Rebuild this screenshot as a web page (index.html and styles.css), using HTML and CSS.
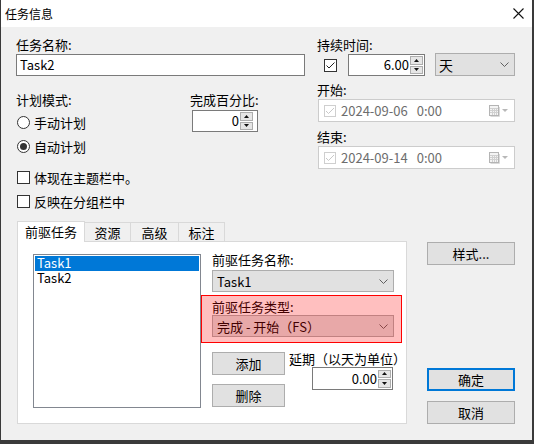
FILE: index.html
```html
<!DOCTYPE html>
<html lang="zh-CN">
<head>
<meta charset="utf-8">
<title>任务信息</title>
<link rel="stylesheet" href="styles.css">
</head>
<body>
<div class="window">
  <div class="titlebar">
    <span class="title">任务信息</span>
    <span class="close"><svg width="11" height="11" viewBox="0 0 11 11"><path d="M0.5 0.5L10.5 10.5M10.5 0.5L0.5 10.5" stroke="#111" stroke-width="1.1" fill="none"/></svg></span>
  </div>
  <div class="client">
    <div class="top">
      <div class="col-left">
        <div class="lbl">任务名称:</div>
        <div class="textbox name-box">Task2</div>
        <div class="mode-row">
          <div class="mode-group">
            <div class="lbl">计划模式:</div>
            <div class="opt r1"><span class="radio"></span>手动计划</div>
            <div class="opt r2"><span class="radio on"></span>自动计划</div>
            <div class="opt c1"><span class="check"></span>体现在主题栏中。</div>
            <div class="opt c2"><span class="check"></span>反映在分组栏中</div>
          </div>
          <div class="pct-group">
            <div class="lbl">完成百分比:</div>
            <div class="spin pct-spin">
              <span class="val">0</span>
              <span class="spinbtns">
                <span class="sb"><svg width="5" height="3" viewBox="0 0 5 3"><path d="M2.5 0L5 3H0Z" fill="#111"/></svg></span>
                <span class="sb"><svg width="5" height="3" viewBox="0 0 5 3"><path d="M0 0H5L2.5 3Z" fill="#111"/></svg></span>
              </span>
            </div>
          </div>
        </div>
      </div>
      <div class="col-right">
        <div class="lbl">持续时间:</div>
        <div class="dur-row">
          <span class="check checked dur-check"><svg width="11" height="11" viewBox="0 0 11 11"><path d="M1.5 5.5L4 8L9.5 2.5" stroke="#222" stroke-width="1" fill="none"/></svg></span>
          <div class="spin dur-spin">
            <span class="val">6.00</span>
            <span class="spinbtns">
              <span class="sb"><svg width="5" height="3" viewBox="0 0 5 3"><path d="M2.5 0L5 3H0Z" fill="#111"/></svg></span>
              <span class="sb"><svg width="5" height="3" viewBox="0 0 5 3"><path d="M0 0H5L2.5 3Z" fill="#111"/></svg></span>
            </span>
          </div>
          <div class="combo unit-combo"><span>天</span><svg width="9" height="5" viewBox="0 0 9 5"><path d="M0.5 0.5L4.5 4.5L8.5 0.5" fill="none" stroke="#606060"/></svg></div>
        </div>
        <div class="lbl start-lbl">开始:</div>
        <div class="datepick">
          <span class="dcheck"><svg width="10" height="10" viewBox="0 0 10 10"><path d="M1 5L3.5 7.5L9 2" stroke="#c8c8c8" fill="none"/></svg></span>
          <span class="dtext">2024-09-06</span><span class="dtime">0:00</span>
          <span class="dicon"><svg width="20" height="12" viewBox="0 0 20 12"><rect x="0.5" y="0.5" width="9" height="10" fill="#f4f4f4" stroke="#b4b4b4"/><path d="M1 3.5H9M1 5.5H9M1 7.5H9M3.5 3V10M5.5 3V10M7.5 3V10" stroke="#d0d0d0"/><path d="M10.5 2V11.5H1.5" stroke="#dadada" fill="none"/><path d="M13 4H19L16 7Z" fill="#b8b8b8"/></svg></span>
        </div>
        <div class="lbl end-lbl">结束:</div>
        <div class="datepick">
          <span class="dcheck"><svg width="10" height="10" viewBox="0 0 10 10"><path d="M1 5L3.5 7.5L9 2" stroke="#c8c8c8" fill="none"/></svg></span>
          <span class="dtext">2024-09-14</span><span class="dtime">0:00</span>
          <span class="dicon"><svg width="20" height="12" viewBox="0 0 20 12"><rect x="0.5" y="0.5" width="9" height="10" fill="#f4f4f4" stroke="#b4b4b4"/><path d="M1 3.5H9M1 5.5H9M1 7.5H9M3.5 3V10M5.5 3V10M7.5 3V10" stroke="#d0d0d0"/><path d="M10.5 2V11.5H1.5" stroke="#dadada" fill="none"/><path d="M13 4H19L16 7Z" fill="#b8b8b8"/></svg></span>
        </div>
      </div>
    </div>

    <div class="bottom">
      <div class="tabarea">
        <div class="tabs">
          <span class="tab sel">前驱任务</span>
          <span class="tab t2">资源</span>
          <span class="tab t3">高级</span>
          <span class="tab t4">标注</span>
        </div>
        <div class="panel">
          <div class="listbox">
            <div class="item selected">Task1</div>
            <div class="item">Task2</div>
          </div>
          <div class="pred">
            <div class="lbl">前驱任务名称:</div>
            <div class="combo pred-combo"><span>Task1</span><svg width="9" height="5" viewBox="0 0 9 5"><path d="M0.5 0.5L4.5 4.5L8.5 0.5" fill="none" stroke="#606060"/></svg></div>
            <div class="redbox">
              <div class="lbl">前驱任务类型:</div>
              <div class="combo type-combo"><span>完成 - 开始（FS）</span><svg width="9" height="5" viewBox="0 0 9 5"><path d="M0.5 0.5L4.5 4.5L8.5 0.5" fill="none" stroke="#606060"/></svg></div>
            </div>
            <div class="act-row">
              <div class="act-btns">
                <div class="btn">添加</div>
                <div class="btn del">删除</div>
              </div>
              <div class="delay">
                <div class="lbl">延期（以天为单位）</div>
                <div class="spin delay-spin">
                  <span class="val">0.00</span>
                  <span class="spinbtns">
                    <span class="sb"><svg width="5" height="3" viewBox="0 0 5 3"><path d="M2.5 0L5 3H0Z" fill="#111"/></svg></span>
                    <span class="sb"><svg width="5" height="3" viewBox="0 0 5 3"><path d="M0 0H5L2.5 3Z" fill="#111"/></svg></span>
                  </span>
                </div>
              </div>
            </div>
          </div>
        </div>
      </div>
      <div class="side">
        <div class="btn style-btn">样式...</div>
        <div class="btn ok-btn">确定</div>
        <div class="btn cancel-btn">取消</div>
      </div>
    </div>
  </div>
</div>
</body>
</html>
```
FILE: styles.css
```css
* { box-sizing: border-box; }
html, body { margin: 0; padding: 0; }
body {
  width: 534px;
  height: 444px;
  overflow: hidden;
  background: #3a3a3a;
  font-family: "Noto Sans CJK SC", "Noto Sans", sans-serif;
  font-size: 13px;
  color: #000;
}
.window {
  width: 534px;
  height: 444px;
  background: #f0f0f0;
  border-left: 1px solid #3a3a3a;
  border-right: 2px solid #3a3a3a;
  border-bottom: 4px solid #3a3a3a;
  display: flex;
  flex-direction: column;
}
.titlebar {
  flex: none;
  height: 27px;
  background: #fff;
  display: flex;
  align-items: center;
  justify-content: space-between;
  padding: 0 8px 0 4px;
  font-size: 12px;
}
.close { display: flex; }
.client {
  padding: 10px 0 0 15px;
}
.lbl {
  height: 16px;
  line-height: 15px;
  white-space: nowrap;
}

/* top section */
.top { display: flex; }
.col-left { width: 289px; }
.col-right { width: 198px; margin-left: 12px; }
.textbox {
  background: #fff;
  border: 1px solid #7a7a7a;
  height: 22px;
  line-height: 20px;
  padding-left: 3px;
}
.name-box { margin-top: 1px; }
.mode-row { display: flex; margin-top: 16px; }
.mode-group { width: 174px; }
.opt {
  display: flex;
  align-items: center;
  height: 16px;
  line-height: 15px;
  white-space: nowrap;
}
.r1 { margin-top: 6px; }
.r2 { margin-top: 8px; }
.c1 { margin-top: 15px; }
.c2 { margin-top: 8px; }
.radio {
  flex: none;
  width: 13px;
  height: 13px;
  border: 1px solid #333;
  border-radius: 50%;
  background: #fff;
  margin: 0 4px 0 1px;
  display: flex;
  align-items: center;
  justify-content: center;
}
.radio.on::after {
  content: "";
  width: 7px;
  height: 7px;
  border-radius: 50%;
  background: #333;
}
.check {
  flex: none;
  width: 13px;
  height: 13px;
  border: 1px solid #333;
  background: #fff;
  margin: 0 4px 0 1px;
  display: flex;
  align-items: center;
  justify-content: center;
}

.spin {
  display: flex;
  align-items: center;
  background: #fff;
  border: 1px solid #7a7a7a;
  height: 22px;
}
.spin .val {
  flex: 1;
  text-align: right;
  line-height: 20px;
  padding-right: 1px;
}
.spinbtns {
  flex: none;
  display: flex;
  flex-direction: column;
  gap: 1px;
  width: 13px;
  height: 18px;
}
.sb {
  flex: 1;
  background: #e6e6e6;
  border: 1px solid #adadad;
  display: flex;
  align-items: center;
  justify-content: center;
}
.pct-spin { width: 66px; margin: 2px 0 0 2px; padding-right: 4px; }
.dur-row { display: flex; align-items: flex-start; height: 23px; }
.dur-check { margin: 6px 0 0 7px; }
.dur-spin { flex: none; width: 77px; margin: 1px 0 0 11px; padding-right: 1px; }
.combo {
  display: flex;
  align-items: center;
  justify-content: space-between;
  background: #e1e1e1;
  border: 1px solid #adadad;
  padding: 0 5px 0 4px;
  white-space: nowrap;
}
.unit-combo { flex: none; width: 80px; height: 23px; margin-left: 10px; font-size: 14px; padding-left: 3px; }
.start-lbl { margin-top: 6px; }
.end-lbl { margin-top: 7px; }
.datepick {
  width: 197px;
  height: 23px;
  margin: 1px 0 0 1px;
  background: #fff;
  border: 1px solid #cccccc;
  display: flex;
  align-items: center;
  color: #6d6d6d;
  padding-left: 5px;
}
.dcheck {
  width: 12px;
  height: 12px;
  border: 1px solid #cfcfcf;
  display: flex;
  align-items: center;
  justify-content: center;
  margin-right: 5px;
}
.dtime { margin-left: 9px; }
.dicon { margin-left: auto; margin-right: 5px; display: flex; }

/* bottom section */
.bottom { display: flex; margin-top: 12px; }
.tabarea { flex: none; width: 390px; margin-left: 1px; }
.tabs { display: flex; height: 21px; align-items: flex-start; position: relative; z-index: 1; }
.tab {
  display: flex;
  align-items: center;
  justify-content: center;
  height: 19px;
  margin-top: 1px;
  border: 1px solid #d9d9d9;
  border-bottom: none;
  border-left: none;
  background: #f0f0f0;
  white-space: nowrap;
}
.tab.sel {
  height: 21px;
  margin-top: 0;
  width: 68px;
  background: #fff;
  border-left: 1px solid #d9d9d9;
  padding-bottom: 2px;
}
.t2 { width: 46px; }
.t3 { width: 48px; }
.t4 { width: 46px; }
.panel {
  height: 183px;
  margin-top: -1px;
  background: #fff;
  border: 1px solid #d9d9d9;
  display: flex;
  align-items: flex-start;
}
.listbox {
  flex: none;
  width: 168px;
  height: 154px;
  margin: 12px 0 0 15px;
  border: 1px solid #828790;
  padding: 1px;
}
.item {
  height: 15px;
  line-height: 14px;
  padding-left: 2px;
}
.item.selected { background: #0078d7; color: #fff; }
.pred { flex: none; width: 182px; margin: 10px 0 0 11px; }
.pred-combo { height: 22px; margin-top: 2px; }
.redbox {
  position: relative;
  margin: 3px -8px 0 -11px;
  padding: 4px 8px 6px 11px;
}
.redbox::after {
  content: "";
  position: absolute;
  inset: 0;
  background: rgba(255, 0, 0, 0.25);
  border: 1px solid #ff0000;
  pointer-events: none;
}
.type-combo { height: 22px; }
.act-row { display: flex; margin-top: 9px; }
.act-btns { flex: none; width: 73px; }
.btn {
  height: 23px;
  background: #e1e1e1;
  border: 1px solid #adadad;
  display: flex;
  align-items: center;
  justify-content: center;
  white-space: nowrap;
}
.del { margin-top: 9px; }
.delay { flex: none; margin: -1px 0 0 4px; }
.delay-spin { width: 81px; height: 23px; margin-left: 23px; padding-right: 1px; }
.side { flex: none; width: 88px; margin-left: 20px; }
.style-btn { margin-top: 21px; }
.ok-btn { margin-top: 103px; border: 2px solid #0078d7; }
.cancel-btn { margin-top: 10px; }
```
